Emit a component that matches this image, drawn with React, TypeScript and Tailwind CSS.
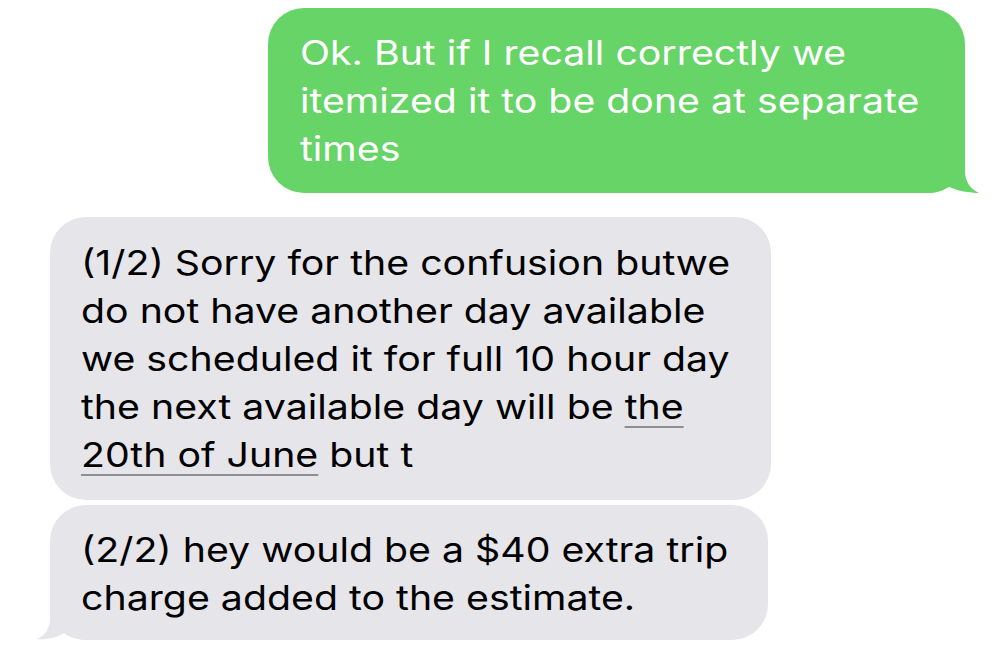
import React from "react";

const font = { fontFamily: "Inter, 'Noto Sans', sans-serif" };

export default function App() {
  return (
    <div className="w-[1000px] h-[648px] bg-white overflow-hidden flex flex-col pt-[8px]" style={font}>
      {/* Green outgoing bubble */}
      <div className="relative ml-[268px] w-[697px] h-[185px] rounded-[36px] bg-[#66d466] pl-[32px] pt-[21px] text-white text-[34px] leading-[48px] whitespace-nowrap">
        <svg className="absolute right-[-14px] bottom-0" width="50" height="46" viewBox="0 0 50 46">
          <path d="M0 46 L0 0 L36 0 L36 24 C36 34 41 42 50 46 C42 46 27 44 19 39 C14 43 8 46 0 46 Z" fill="#66d466" />
        </svg>
        <div className="relative origin-left scale-x-[1.155]">
          <p>Ok. But if I recall correctly we</p>
          <p>itemized it to be done at separate</p>
          <p>times</p>
        </div>
      </div>

      {/* Grey incoming bubble 1 */}
      <div className="ml-[50px] mt-[24px] w-[721px] h-[283px] rounded-[36px] bg-[#e5e5ea] pl-[31px] pt-[22px] text-black text-[34px] leading-[48px] whitespace-nowrap">
        <div className="origin-left scale-x-[1.155]">
          <p>(1/2) Sorry for the confusion butwe</p>
          <p>do not have another day available</p>
          <p>we scheduled it for full 10 hour day</p>
          <p>
            the next available day will be{" "}
            <span className="underline decoration-[#8e8e93] decoration-2 underline-offset-[7px]">the</span>
          </p>
          <p>
            <span className="underline decoration-[#8e8e93] decoration-2 underline-offset-[7px]">20th of June</span> but t
          </p>
        </div>
      </div>

      {/* Grey incoming bubble 2 */}
      <div className="relative ml-[50px] mt-[5px] w-[718px] h-[135px] rounded-[36px] bg-[#e5e5ea] pl-[31px] pt-[21px] text-black text-[34px] leading-[48px] whitespace-nowrap">
        <svg className="absolute left-[-13px] bottom-0" width="50" height="46" viewBox="0 0 50 46">
          <path d="M50 46 L50 0 L13 0 L13 24 C13 34 8 42 0 45 C8 46 20 44 27 39 C32 43 40 46 50 46 Z" fill="#e5e5ea" />
        </svg>
        <div className="relative origin-left scale-x-[1.155]">
          <p>(2/2) hey would be a $40 extra trip</p>
          <p>charge added to the estimate.</p>
        </div>
      </div>
    </div>
  );
}
